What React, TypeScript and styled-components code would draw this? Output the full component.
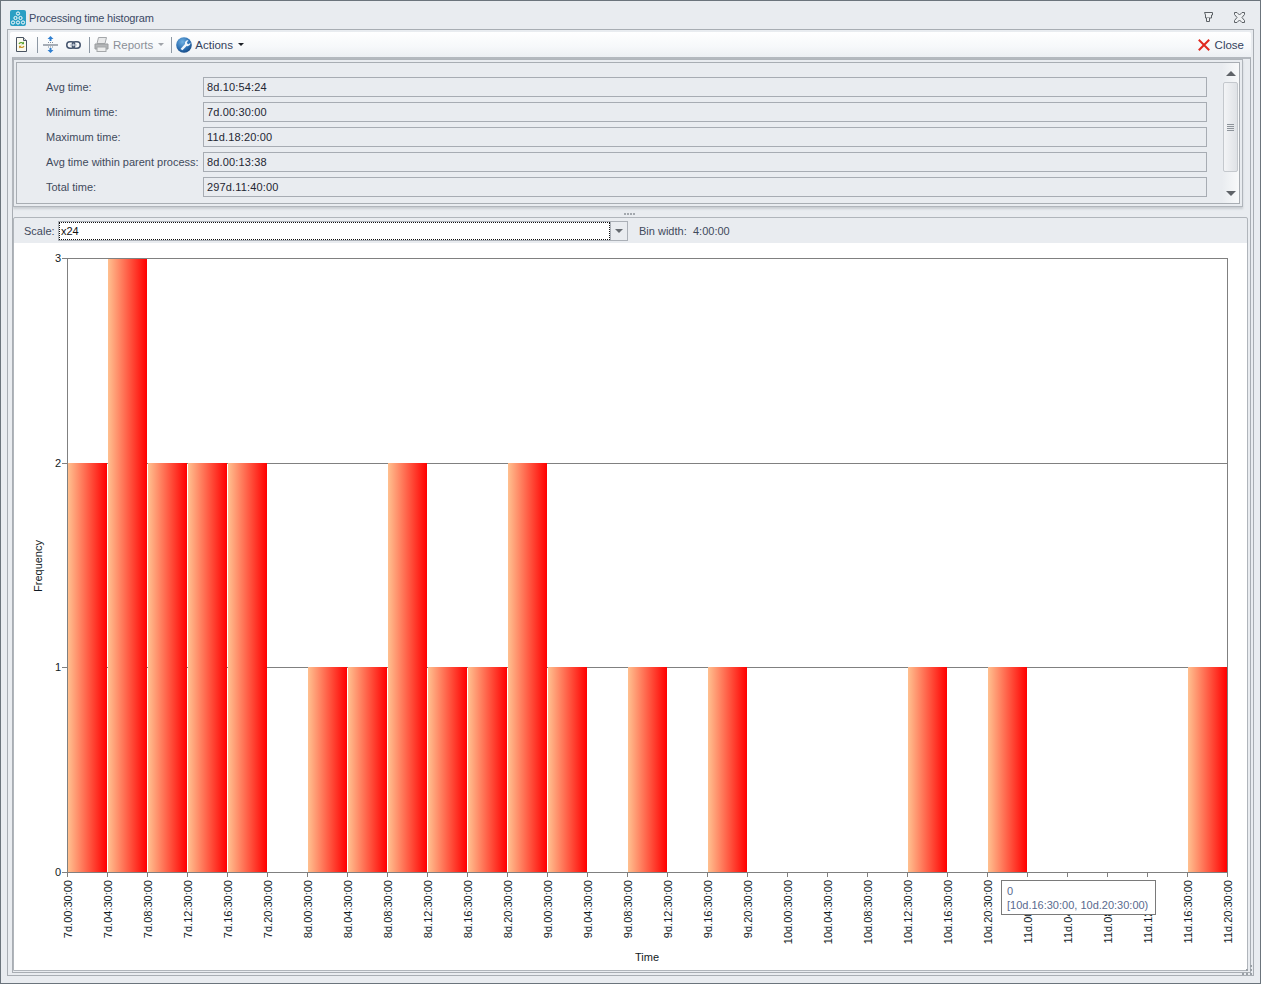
import React from 'react';
import styled, { createGlobalStyle } from 'styled-components';

const GlobalStyle = createGlobalStyle`
    html, body {
        margin: 0;
        padding: 0;
        background: #e9ecf0;
    }
    * {
        box-sizing: border-box;
    }
`;

const uiFont = `"Liberation Sans", Arial, sans-serif`;
const chartFont = `"Liberation Sans", Arial, sans-serif`;

const fields = [
    { label: 'Avg time:', value: '8d.10:54:24' },
    { label: 'Minimum time:', value: '7d.00:30:00' },
    { label: 'Maximum time:', value: '11d.18:20:00' },
    { label: 'Avg time within parent process:', value: '8d.00:13:38' },
    { label: 'Total time:', value: '297d.11:40:00' },
];

const bins = [2, 3, 2, 2, 2, 0, 1, 1, 2, 1, 1, 2, 1, 0, 1, 0, 1, 0, 0, 0, 0, 1, 0, 1, 0, 0, 0, 0, 1];
const hours = ['00', '04', '08', '12', '16', '20'];
const ticks = [7, 8, 9, 10, 11].flatMap((day) => hours.map((h) => `${day}d.${h}:30:00`));

const plot = { left: 53, top: 15, width: 1160, height: 614 };
const binWidth = plot.width / bins.length;
const bottom = plot.top + plot.height;
const valueY = (v: number) => Math.round(bottom - (v * plot.height) / 3);

const Histogram = () => (
    <ChartSvg viewBox="0 0 1233 726">
        <defs>
            <linearGradient id="bar" x1="0" x2="1" y1="0" y2="0">
                <stop offset="0" stopColor="#ffc08f" />
                <stop offset="1" stopColor="#ff0000" />
            </linearGradient>
        </defs>
        {[1, 2].map((v) => (
            <line key={v} x1={plot.left} x2={plot.left + plot.width} y1={valueY(v) + 0.5} y2={valueY(v) + 0.5} stroke="#808080" />
        ))}
        {bins.map((v, i) =>
            v > 0 ? (
                <rect key={i} x={plot.left + i * binWidth + 1} y={valueY(v)} width={39} height={bottom - valueY(v)} fill="url(#bar)" />
            ) : null
        )}
        <rect x={plot.left + 0.5} y={plot.top + 0.5} width={plot.width} height={plot.height} fill="none" stroke="#808080" />
        {[0, 1, 2, 3].map((v) => (
            <g key={v}>
                <line x1={plot.left - 5} x2={plot.left} y1={valueY(v) + 0.5} y2={valueY(v) + 0.5} stroke="#808080" />
                <text x={plot.left - 6} y={valueY(v) + 4} textAnchor="end">{v}</text>
            </g>
        ))}
        {ticks.map((t, i) => {
            const x = plot.left + i * binWidth + 0.5;
            return (
                <g key={t}>
                    <line x1={x} x2={x} y1={bottom} y2={bottom + 5} stroke="#808080" />
                    <text transform={`translate(${x + 4} ${bottom + 8}) rotate(-90)`} textAnchor="end">{t}</text>
                </g>
            );
        })}
        <text transform="translate(28 323) rotate(-90)" textAnchor="middle">Frequency</text>
        <text x={633} y={718} textAnchor="middle">Time</text>
    </ChartSvg>
);

const AppIcon = () => (
    <svg width="16" height="16" viewBox="0 0 16 16">
        <rect width="16" height="16" rx="2" fill="#2b9fc4" />
        <g fill="none" stroke="#fff" strokeWidth="1">
            <circle cx="8" cy="3.5" r="1.6" />
            <circle cx="5.5" cy="8" r="1.6" />
            <circle cx="10.5" cy="8" r="1.6" />
            <circle cx="3" cy="12.5" r="1.6" />
            <circle cx="8" cy="12.5" r="1.6" />
            <circle cx="13" cy="12.5" r="1.6" />
        </g>
    </svg>
);

const PinIcon = () => (
    <svg width="11" height="11" viewBox="0 0 11 11" fill="#eef0f2" stroke="#5c6166">
        <path d="M1.500 .5h8v2.500h-1v3h-6v-3z" />
        <path d="M3.500 6v3.500h3V6" />
    </svg>
);

const CloseOutlineIcon = () => (
    <svg width="13" height="11" viewBox="0 0 13 11" fill="#eef0f2" stroke="#5c6166">
        <path d="M1.500 .5h2.500l2.500 2.500 2.500-2.500h2.500v2l-2.500 3 2.500 3v2h-2.500l-2.500-2.500-2.500 2.500h-2.500v-2l2.500-3-2.500-3z" />
    </svg>
);

const RefreshDocIcon = () => (
    <svg width="11" height="15" viewBox="0 0 11 15">
        <path d="M.5 .5h7l3 3v11h-10z" fill="#fbfaf0" stroke="#4a5462" />
        <path d="M7.500 .5v3h3" fill="#d9dde2" stroke="#4a5462" />
        <path d="M3 7a2.500 2.500 0 0 1 4-.8" fill="none" stroke="#5aa02c" strokeWidth="1.2" />
        <path d="M8 9a2.500 2.500 0 0 1-4 .8" fill="none" stroke="#c9962a" strokeWidth="1.2" />
        <path d="M8 4.500v2.800h-2.800z" fill="#5aa02c" />
        <path d="M3 11.500v-2.800h2.800z" fill="#c9962a" />
    </svg>
);

const ExpandIcon = () => (
    <svg width="15" height="17" viewBox="0 0 15 17">
        <path d="M7.500 0l3 3h-2v2h-2v-2h-2zM7.500 17l3-3h-2v-2h-2v2h-2z" fill="#2f7fd0" />
        <rect y="8" width="15" height="2" fill="#a6adb6" />
        <path d="M5 6.500h1M7 6.500h1M9 6.500h1M5 11h1M7 11h1M9 11h1" stroke="#7f8a96" />
    </svg>
);

const LinkIcon = () => (
    <svg width="15" height="8" viewBox="0 0 15 8" fill="none">
        <rect x=".75" y=".75" width="8" height="6.500" rx="3.200" stroke="#46566f" strokeWidth="1.500" />
        <rect x="6.250" y=".75" width="8" height="6.500" rx="3.200" stroke="#46566f" strokeWidth="1.500" />
        <path d="M4 4h7" stroke="#b9c4d2" strokeWidth="1.200" />
    </svg>
);

const PrinterIcon = () => (
    <svg width="15" height="15" viewBox="0 0 15 15">
        <path d="M4.500 .5h8l-1.500 6h-8z" fill="#e8e9ea" stroke="#a4a7aa" />
        <path d="M1 7h13v5h-13z" fill="#b5b7b9" stroke="#9a9d9f" />
        <rect x="3" y="10" width="9" height="4.500" fill="#eceded" stroke="#a4a7aa" />
    </svg>
);

const ActionsIcon = () => (
    <svg width="16" height="16" viewBox="0 0 16 16">
        <defs>
            <radialGradient id="globe" cx=".4" cy=".3" r=".8">
                <stop offset="0" stopColor="#6fb0e2" />
                <stop offset=".6" stopColor="#2a6db0" />
                <stop offset="1" stopColor="#123f78" />
            </radialGradient>
        </defs>
        <circle cx="8" cy="8" r="7.800" fill="url(#globe)" />
        <path d="M4.500 12l4.500-5a2.800 2.800 0 0 1 3.500-3.500l-1.700 1.700.5 1.500 1.500.5 1.600-1.700a3 3 0 0 1-3.800 3.500l-4.100 4.300z" fill="#eef5fb" />
    </svg>
);

const CloseIcon = () => (
    <svg width="12" height="12" viewBox="0 0 12 12" stroke="#e0281e" strokeWidth="2" strokeLinecap="square">
        <path d="M1.500 1.500l9 9M10.500 1.500l-9 9" />
    </svg>
);

const Grip = () => (
    <GripSvg width="11" height="11" viewBox="0 0 11 11" fill="#9aa0a6">
        <path d="M8 0h2v2h-2zM8 4h2v2h-2zM4 4h2v2h-2zM8 8h2v2h-2zM4 8h2v2h-2zM0 8h2v2h-2z" />
    </GripSvg>
);

export default function App() {
    return (
        <>
            <GlobalStyle />
            <Window>
                <TitleBar>
                    <TitleIcon><AppIcon /></TitleIcon>
                    <TitleText>Processing time histogram</TitleText>
                    <TitleButtons>
                        <PinIcon />
                        <CloseOutlineIcon />
                    </TitleButtons>
                </TitleBar>
                <Frame>
                    <Toolbar>
                        <ToolIcon $left={6}><RefreshDocIcon /></ToolIcon>
                        <Separator $left={10} />
                        <ToolIcon $left={5}><ExpandIcon /></ToolIcon>
                        <ToolIcon $left={8}><LinkIcon /></ToolIcon>
                        <Separator $left={8} />
                        <ToolIcon $left={4}><PrinterIcon /></ToolIcon>
                        <ToolLabel $left={4} $disabled>Reports</ToolLabel>
                        <MenuArrow $left={5} $disabled />
                        <Separator $left={7} />
                        <ToolIcon $left={4}><ActionsIcon /></ToolIcon>
                        <ToolLabel $left={3}>Actions</ToolLabel>
                        <MenuArrow $left={5} />
                        <CloseButton>
                            <CloseIcon />
                            <ToolLabel $left={5}>Close</ToolLabel>
                        </CloseButton>
                    </Toolbar>
                    <InnerFrame>
                        <SummaryOuter>
                            <SummaryInner>
                                <Rows>
                                    {fields.map((f) => (
                                        <Row key={f.label}>
                                            <RowLabel>{f.label}</RowLabel>
                                            <RowValue>{f.value}</RowValue>
                                        </Row>
                                    ))}
                                </Rows>
                                <ScrollBar>
                                    <ScrollArrow $up />
                                    <ScrollThumb><ThumbGrip /></ScrollThumb>
                                    <ScrollArrow />
                                </ScrollBar>
                            </SummaryInner>
                        </SummaryOuter>
                        <Splitter>
                            <SplitterDot /><SplitterDot /><SplitterDot /><SplitterDot />
                        </Splitter>
                        <ChartBox>
                            <ScaleBar>
                                <ScaleLabel>Scale:</ScaleLabel>
                                <Combo>
                                    <ComboInput>x24</ComboInput>
                                    <ComboButton><ComboArrow /></ComboButton>
                                </Combo>
                                <BinLabel>Bin width:</BinLabel>
                                <BinValue>4:00:00</BinValue>
                            </ScaleBar>
                            <ChartArea>
                                <Histogram />
                                <Tooltip>
                                    <span>0</span>
                                    <span>[10d.16:30:00, 10d.20:30:00)</span>
                                </Tooltip>
                            </ChartArea>
                        </ChartBox>
                        <Grip />
                    </InnerFrame>
                </Frame>
            </Window>
        </>
    );
}

const Window = styled.div`
    position: relative;
    width: 1261px;
    height: 984px;
    display: flex;
    flex-direction: column;
    padding: 0 6px 7px;
    background: #e9ecf0;
    border: 1px solid #6b747c;
    font-family: ${uiFont};
    font-size: 11px;
    color: #3b4656;
    overflow: hidden;
`;

const TitleBar = styled.div`
    height: 28px;
    flex: none;
    display: flex;
    align-items: center;
    padding-top: 5px;
`;

const TitleIcon = styled.div`
    display: flex;
    margin: 0 3px 0 3px;
`;

const TitleText = styled.span`
    font-size: 11px;
    letter-spacing: -0.2px;
    color: #3c4a66;
`;

const TitleButtons = styled.div`
    margin-left: auto;
    display: flex;
    align-items: center;
    gap: 19px;
    padding-right: 8px;
`;

const Frame = styled.div`
    flex: 1;
    min-height: 0;
    display: flex;
    flex-direction: column;
    padding: 2px;
    border: 1px solid #a8adb3;
`;

const Toolbar = styled.div`
    height: 25px;
    flex: none;
    display: flex;
    align-items: center;
    background: linear-gradient(#ffffff, #f6f8fa 60%, #eceff3);
    border-radius: 2px 2px 0 0;
`;

const ToolIcon = styled.div<{ $left: number }>`
    display: flex;
    margin-left: ${(p) => p.$left}px;
`;

const Separator = styled.div<{ $left: number }>`
    width: 1px;
    height: 16px;
    margin-left: ${(p) => p.$left}px;
    background: #8d98a4;
`;

const ToolLabel = styled.span<{ $left: number; $disabled?: boolean }>`
    margin-left: ${(p) => p.$left}px;
    font-size: 11.5px;
    color: ${(p) => (p.$disabled ? '#8b9098' : '#34425c')};
`;

const MenuArrow = styled.div<{ $left: number; $disabled?: boolean }>`
    margin-left: ${(p) => p.$left}px;
    width: 0;
    height: 0;
    border-left: 3px solid transparent;
    border-right: 3px solid transparent;
    border-top: 3px solid ${(p) => (p.$disabled ? '#a0a4a9' : '#1c2026')};
`;

const CloseButton = styled.div`
    margin-left: auto;
    display: flex;
    align-items: center;
    padding-right: 7px;
`;

const InnerFrame = styled.div`
    position: relative;
    flex: 1;
    min-height: 0;
    display: flex;
    flex-direction: column;
    margin-left: 2px;
    padding: 0 2px 1px 0;
    border-top: 2px solid #b3b8be;
    border-left: 1px solid #a8adb3;
    border-right: 1px solid #a8adb3;
    border-bottom: 1px solid #a8adb3;
`;

const SummaryOuter = styled.div`
    height: 148px;
    flex: none;
    margin-right: 5px;
    padding: 2px;
    border: 1px solid #b0b5bb;
    box-shadow: 0 2px 2px #c9cdd2;
`;

const SummaryInner = styled.div`
    height: 100%;
    display: flex;
    border: 1px solid #a8adb3;
`;

const Rows = styled.div`
    flex: 1;
    display: flex;
    flex-direction: column;
    gap: 5px;
    padding: 14px 15px 0 29px;
`;

const Row = styled.div`
    height: 20px;
    display: flex;
    align-items: center;
`;

const RowLabel = styled.span`
    width: 157px;
    flex: none;
    white-space: nowrap;
    color: #3f4a5c;
`;

const RowValue = styled.div`
    flex: 1;
    height: 20px;
    display: flex;
    align-items: center;
    padding-left: 3px;
    border: 1px solid #a7acb3;
    letter-spacing: 0.15px;
    color: #1f2733;
`;

const ScrollBar = styled.div`
    width: 17px;
    flex: none;
    display: flex;
    flex-direction: column;
    align-items: center;
    padding: 8px 0 7px;
    background: linear-gradient(90deg, #e9ecf0, #f8f9fa);
`;

const ScrollArrow = styled.div<{ $up?: boolean }>`
    width: 0;
    height: 0;
    border-left: 5px solid transparent;
    border-right: 5px solid transparent;
    ${(p) => (p.$up ? 'border-bottom: 5px solid #5f6368;' : 'border-top: 5px solid #5f6368; margin-top: auto;')}
`;

const ScrollThumb = styled.div`
    width: 15px;
    height: 90px;
    margin-top: 6px;
    display: flex;
    align-items: center;
    justify-content: center;
    background: linear-gradient(90deg, #f3f4f6, #dfe2e6);
    border: 1px solid #c4c8cd;
    border-radius: 2px;
`;

const ThumbGrip = styled.div`
    width: 7px;
    height: 7px;
    background: repeating-linear-gradient(#8d939a 0 1px, transparent 1px 2px);
`;

const Splitter = styled.div`
    height: 10px;
    flex: none;
    display: flex;
    align-items: flex-end;
    justify-content: center;
    gap: 1px;
    padding: 0 2px 2px 0;
`;

const SplitterDot = styled.div`
    width: 2px;
    height: 2px;
    background: #a3a8ae;
`;

const ChartBox = styled.div`
    flex: 1;
    min-height: 0;
    display: flex;
    flex-direction: column;
    border: 1px solid #b0b5bb;
    border-radius: 2px 2px 0 0;
`;

const ScaleBar = styled.div`
    height: 25px;
    flex: none;
    display: flex;
    align-items: center;
    padding-left: 10px;
`;

const ScaleLabel = styled.span`
    width: 34px;
    flex: none;
    color: #3f4a5c;
`;

const Combo = styled.div`
    width: 570px;
    height: 20px;
    display: flex;
    border: 1px solid #abb0b7;
    background: #fff;
`;

const ComboInput = styled.div`
    flex: 1;
    display: flex;
    align-items: center;
    padding-left: 1px;
    border: 1px dotted #111;
    color: #111;
`;

const ComboButton = styled.div`
    width: 17px;
    display: flex;
    align-items: center;
    justify-content: center;
    background: #e9ecf0;
    border-left: 1px solid #abb0b7;
`;

const ComboArrow = styled.div`
    width: 0;
    height: 0;
    border-left: 4px solid transparent;
    border-right: 4px solid transparent;
    border-top: 4px solid #666b71;
`;

const BinLabel = styled.span`
    margin-left: 11px;
    width: 54px;
    color: #3f4a5c;
`;

const BinValue = styled.span`
    color: #3f4a5c;
`;

const ChartArea = styled.div`
    position: relative;
    flex: 1;
    min-height: 0;
    background: #fff;
`;

const ChartSvg = styled.svg`
    display: block;
    width: 1233px;
    height: 726px;
    font-family: ${chartFont};
    font-size: 11px;
    fill: #111a24;
`;

const Tooltip = styled.div`
    position: absolute;
    left: 987px;
    top: 637px;
    width: 155px;
    height: 35px;
    display: flex;
    flex-direction: column;
    justify-content: center;
    padding-left: 5px;
    background: #fff;
    border: 1px solid #7a7a7a;
    font-family: ${chartFont};
    font-size: 11px;
    line-height: 14px;
    color: #5a6a8e;
    white-space: nowrap;
`;

const GripSvg = styled.svg`
    position: absolute;
    right: -3px;
    bottom: -4px;
`;
